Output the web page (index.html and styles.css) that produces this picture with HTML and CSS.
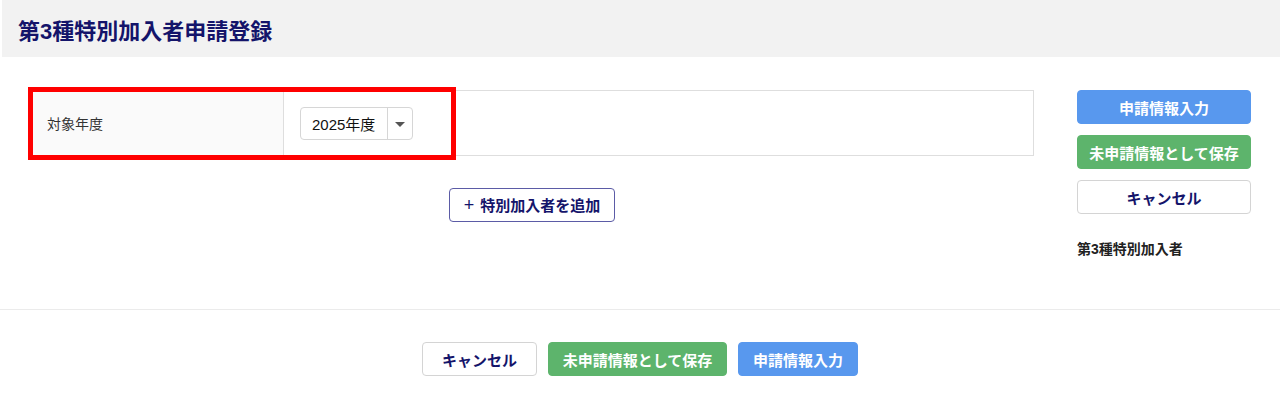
FILE: index.html
```html
<!DOCTYPE html>
<html lang="ja">
<head>
  <meta charset="UTF-8">
  <title>第3種特別加入者申請登録</title>
  <link rel="stylesheet" href="styles.css">
</head>
<body>
  <div class="page-head">
    <h1>第3種特別加入者申請登録</h1>
  </div>

  <div class="main">
    <div class="content">
      <div class="form-wrap">
        <table class="form-table">
          <tr>
            <th>対象年度</th>
            <td>
              <div class="select">
                <span class="select-value">2025年度</span>
                <span class="select-arrow"></span>
              </div>
            </td>
          </tr>
        </table>
        <div class="highlight"></div>
      </div>
      <div class="add-row">
        <button class="btn btn-outline"><span class="plus">+</span> 特別加入者を追加</button>
      </div>
    </div>

    <div class="side">
      <button class="btn btn-blue">申請情報入力</button>
      <button class="btn btn-green">未申請情報として保存</button>
      <button class="btn btn-white">キャンセル</button>
      <p class="side-note">第3種特別加入者</p>
    </div>
  </div>

  <div class="footer">
    <button class="btn btn-white f-cancel">キャンセル</button>
    <button class="btn btn-green f-save">未申請情報として保存</button>
    <button class="btn btn-blue f-apply">申請情報入力</button>
  </div>
</body>
</html>
```

FILE: styles.css
```css
body { margin: 0; font-family: "Liberation Sans", "Noto Sans CJK JP", sans-serif; color: #222; background: #fff; }
.page-head { margin-left: 2px; height: 57px; background: #f2f2f2; display: flex; align-items: center; padding-left: 16px; }
h1 { margin: 0; font-size: 22px; font-weight: bold; color: #14146a; }

.main { display: flex; justify-content: space-between; padding: 33px 29px 0 30px; height: 219px; }
.content { width: 1004px; }
.form-wrap { position: relative; }
.form-table { width: 100%; border-collapse: collapse; border: 1px solid #dedede; }
.form-table th { width: 236px; height: 64px; padding: 0 0 0 16px; text-align: left; font-weight: normal; font-size: 14px; color: #333; background: #fafafa; border-right: 1px solid #dedede; }
.form-table td { padding: 0 0 0 16px; }

.select { display: inline-flex; height: 33px; border: 1px solid #d6d6d6; border-radius: 4px; box-sizing: border-box; width: 113px; align-items: stretch; }
.select-value { flex: 1; display: flex; align-items: center; padding-left: 11px; font-size: 15px; color: #111; }
.select-arrow { width: 24px; border-left: 1px solid #d6d6d6; position: relative; }
.select-arrow::after { content: ""; position: absolute; left: 7px; top: 14px; border-left: 5px solid transparent; border-right: 5px solid transparent; border-top: 5px solid #555; }

.highlight { position: absolute; left: -2px; top: -3px; width: 428px; height: 73px; border: 5px solid #ff0000; box-sizing: border-box; pointer-events: none; }

.add-row { display: flex; justify-content: center; margin-top: 32px; }

.btn { font-family: inherit; font-size: 15px; font-weight: bold; height: 34px; border-radius: 4px; cursor: pointer; padding: 0; }
.btn-outline { width: 166px; background: #fff; border: 1px solid #5b5ba6; color: #14146a; }
.plus { font-size: 18px; font-weight: normal; margin-right: 2px; }
.btn-blue { background: #5898ee; border: 1px solid #5898ee; color: #fff; }
.btn-green { background: #5db46c; border: 1px solid #5db46c; color: #fff; }
.btn-white { background: #fff; border: 1px solid #d4d4d4; color: #14146a; }

.side { width: 174px; display: flex; flex-direction: column; gap: 11px; }
.side .btn { width: 174px; }
.side-note { margin: 13px 0 0; font-size: 14px; font-weight: bold; color: #222; }

.footer { border-top: 1px solid #ebebeb; display: flex; justify-content: center; gap: 11px; padding-top: 32px; height: 53px; }
.f-cancel { width: 115px; }
.f-save { width: 179px; }
.f-apply { width: 120px; }
```
